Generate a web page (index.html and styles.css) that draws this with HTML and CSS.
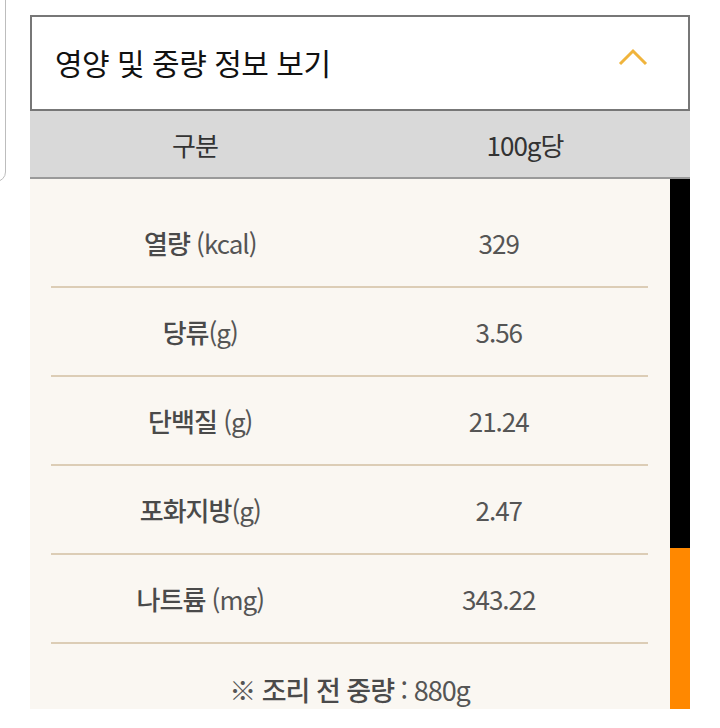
FILE: index.html
```html
<!DOCTYPE html>
<html lang="ko">
<head>
<meta charset="utf-8">
<link rel="stylesheet" href="styles.css">
</head>
<body>
<div class="side-popup"></div>
<section class="panel">
  <div class="toggle">
    <span class="toggle-title">영양 및 중량 정보 보기</span>
    <svg class="chevron" width="32" height="20" viewBox="0 0 32 20"><polyline points="3,17 16,4 29,17" fill="none" stroke="#f0b43c" stroke-width="3"/></svg>
  </div>
  <div class="thead">
    <span>구분</span>
    <span>100g당</span>
  </div>
  <div class="tbody">
    <div class="content">
      <div class="row"><span class="label"><b>열량</b> (kcal)</span><span class="val">329</span></div>
      <div class="row"><span class="label"><b>당류</b>(g)</span><span class="val">3.56</span></div>
      <div class="row"><span class="label"><b>단백질</b> (g)</span><span class="val">21.24</span></div>
      <div class="row"><span class="label"><b>포화지방</b>(g)</span><span class="val">2.47</span></div>
      <div class="row"><span class="label"><b>나트륨</b> (mg)</span><span class="val">343.22</span></div>
      <p class="note">※ <b>조리 전 중량</b> : 880g</p>
    </div>
    <div class="scrollbar">
      <div class="track"></div>
      <div class="thumb"></div>
    </div>
  </div>
</section>
</body>
</html>
```
FILE: styles.css
```css
html, body {
  margin: 0;
  padding: 0;
  background: #fff;
}
body {
  position: relative;
  font-family: "Noto Sans CJK KR", "Noto Sans", sans-serif;
  overflow: hidden;
  height: 728px;
}
.side-popup {
  position: absolute;
  left: -100px;
  top: -20px;
  width: 104px;
  height: 200px;
  border: 1.5px solid #bdbdbd;
  border-radius: 10px;
}
.panel {
  margin: 15px 30px 0 30px;
  width: 660px;
}
.toggle {
  box-sizing: border-box;
  height: 96px;
  border: 2px solid #777;
  display: flex;
  align-items: center;
  justify-content: space-between;
  padding: 0 39px 0 23px;
}
.toggle-title {
  font-size: 30px;
  color: #111;
  letter-spacing: -0.5px;
  line-height: 1;
  margin-top: -2px;
}
.chevron {
  display: block;
  margin-top: -12px;
}
.thead {
  display: grid;
  grid-template-columns: 1fr 1fr;
  height: 66px;
  align-items: center;
  background: #d9d9d9;
  border-bottom: 2px solid #9a9a9a;
  font-size: 26px;
  color: #333;
  text-align: center;
  letter-spacing: -1px;
}
.tbody {
  display: flex;
  height: 530px;
}
.content {
  flex: 1;
  background: #faf7f2;
  padding: 20px 22px 0 21px;
  overflow: hidden;
}
.row {
  display: grid;
  grid-template-columns: 1fr 1fr;
  align-items: center;
  height: 87px;
  border-bottom: 2px solid #dccdb6;
  text-align: center;
  font-size: 26px;
  color: #555;
  letter-spacing: -1px;
}
.label b {
  font-weight: 500;
  color: #4a4a4a;
}
.label {
  font-weight: 400;
}
.note {
  margin: 0;
  padding-top: 29px;
  line-height: 34px;
  text-align: center;
  font-size: 27px;
  color: #555;
  letter-spacing: -1px;
}
.note b {
  font-weight: 500;
  color: #4a4a4a;
}
.scrollbar {
  width: 20px;
  display: flex;
  flex-direction: column;
}
.track {
  flex: 1;
  background: #000;
}
.thumb {
  height: 161px;
  background: #ff8800;
}
```
